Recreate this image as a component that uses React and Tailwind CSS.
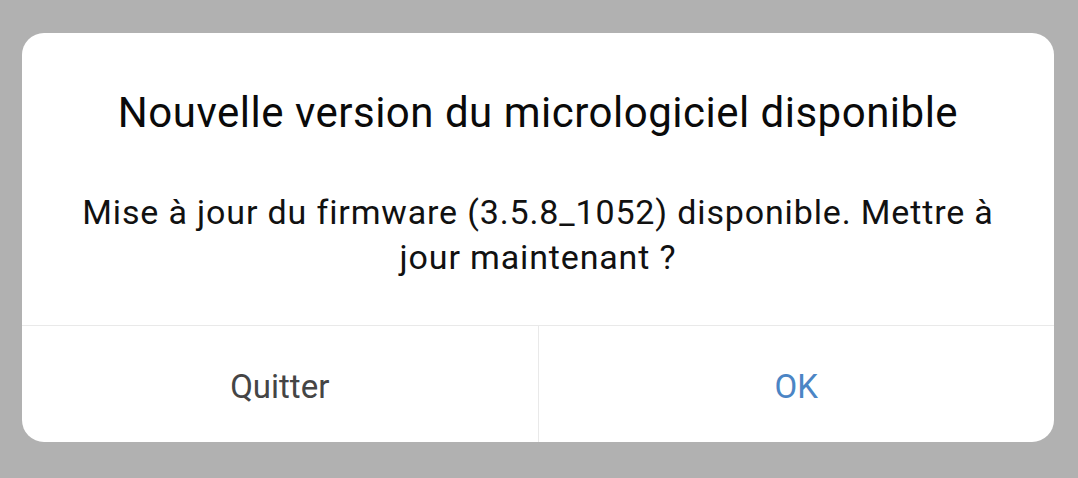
export default function App() {
  return (
    <div
      className="h-[478px] w-full bg-[#b1b1b1] pl-[22px] pr-[24px] pt-[33px]"
      style={{ fontFamily: "Roboto, 'Noto Sans', sans-serif" }}
    >
      {/* Dialog */}
      <div className="flex h-[409px] flex-col overflow-hidden rounded-[22px] bg-white">
        <div className="flex h-[292px] flex-col items-center px-[40px] pt-[55px] text-center">
          <h1 className="text-[42px] leading-[50px] tracking-[0.5px] text-[#0a0a0a]">
            Nouvelle version du micrologiciel disponible
          </h1>
          <p className="mt-[52px] text-[34px] leading-[45px] tracking-[0.85px] text-[#111111]">
            Mise à jour du firmware (3.5.8_1052) disponible. Mettre à jour maintenant ?
          </p>
        </div>

        {/* Buttons */}
        <div className="flex flex-1 border-t border-[#e9e9e9]">
          <button className="flex flex-1 items-center justify-center pt-[5px] text-[33px] text-[#454545]">
            Quitter
          </button>
          <div className="w-px bg-[#e9e9e9]" />
          <button className="flex flex-1 items-center justify-center pt-[5px] text-[33px] text-[#4b85c5]">
            OK
          </button>
        </div>
      </div>
    </div>
  );
}
